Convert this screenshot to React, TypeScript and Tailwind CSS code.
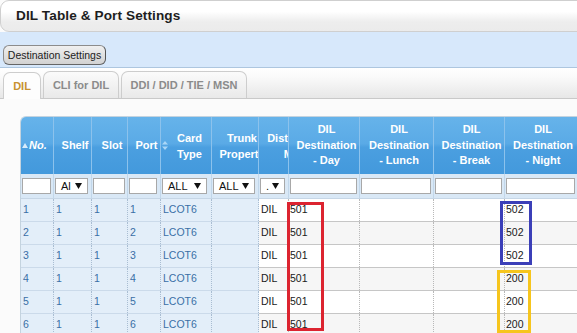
import React from 'react';

const rows = [
  { no: 1, port: 1, night: '502' },
  { no: 2, port: 2, night: '502' },
  { no: 3, port: 3, night: '502' },
  { no: 4, port: 4, night: '200' },
  { no: 5, port: 5, night: '200' },
  { no: 6, port: 6, night: '200' },
];

const Caret = () => (
  <svg width="7" height="6" viewBox="0 0 7 6" className="shrink-0">
    <path d="M0 0h7L3.5 6z" fill="#111" />
  </svg>
);

const SortBoth = () => (
  <svg width="6" height="9" viewBox="0 0 6 9" className="shrink-0">
    <path d="M3 0L6 3.5H0z M0 5.5h6L3 9z" fill="#a9d6f7" />
  </svg>
);

const SortUp = () => (
  <svg width="6" height="5" viewBox="0 0 6 5" className="shrink-0 mr-[1px]">
    <path d="M3 0L6 5H0z" fill="#d6ecfc" />
  </svg>
);

const TextBox = () => <div className="h-[16px] w-full bg-white border border-[#a8a8a8]" />;

const SelectBox = ({ label }: { label: string }) => (
  <div className="h-[16px] w-full bg-white border border-[#a8a8a8] flex items-center justify-between pl-[5px] pr-[5px] text-[11px] text-[#111] leading-none overflow-hidden">
    <span>{label}</span>
    <Caret />
  </div>
);

const th = 'h-[57px] shrink-0 border-r border-[#8cc2ec] flex items-center text-white font-bold text-[11px] leading-[15.5px]';
const fl = 'h-[24px] shrink-0 border-r border-[#c2d7ea] flex items-center pl-[1px] pr-[2px]';
const lc = 'shrink-0 h-full border-r border-dotted border-[#a9bdd2] pl-[2px] flex items-center text-[#3a6ea6]';
const rc = 'shrink-0 h-full border-r border-dotted border-[#b8b8b8] pl-[1px] flex items-center text-[#1a1a1a]';

export default function App() {
  return (
    <div className="relative w-[577px] h-[333px] overflow-hidden bg-[#fbfbfb] font-['Liberation_Sans',Arial,sans-serif]">
      {/* title bar */}
      <div className="h-[32px] w-[600px] border border-[#cfcfcf] rounded-l-[9px] bg-[linear-gradient(#ffffff,#ffffff_35%,#ededed_70%,#ebebeb)] flex items-center pl-[15px]">
        <h1 className="text-[13.6px] font-bold text-[#1e1e1e] tracking-[0.1px]">DIL Table &amp; Port Settings</h1>
      </div>

      {/* toolbar */}
      <div className="h-[36px] bg-[#d7e8fb] border-b border-[#adc6df] pt-[10px] pl-[3px]">
        <button className="h-[20px] w-[103px] rounded-[6px] border border-[#8c8c8c] border-r-[#555] border-b-[#666] bg-[linear-gradient(#f0f0f0,#dedede_60%,#d2d2d2)] text-[10.5px] text-[#222] leading-none">
          Destination Settings
        </button>
      </div>

      {/* tabs */}
      <div className="h-[31px] bg-[linear-gradient(#ffffff,#fafafa_30%,#e7e7e7)] border-b border-[#c9c9c9] flex items-end pl-[3px] gap-[2px]">
        <div className="h-[27px] w-[38px] -mb-[1px] rounded-t-[7px] border border-b-0 border-[#cdcdcd] bg-[#fdfdfd] flex items-center justify-center text-[11px] font-bold text-[#c8922f]">DIL</div>
        <div className="h-[27px] w-[76px] rounded-t-[7px] border border-b-0 border-[#cdcdcd] bg-[linear-gradient(#fbfbfb,#e9e9e9)] flex items-center justify-center text-[11px] font-bold text-[#8b8b8b]">CLI for DIL</div>
        <div className="h-[27px] w-[126px] rounded-t-[7px] border border-b-0 border-[#cdcdcd] bg-[linear-gradient(#fbfbfb,#e9e9e9)] flex items-center justify-center text-[11px] font-bold text-[#8b8b8b]">DDI / DID / TIE / MSN</div>
      </div>

      {/* grid */}
      <div className="ml-[20px] mt-[17px] w-[620px] border-t border-l border-[#c4d3df] rounded-tl-[6px] overflow-hidden">
        <div className="flex bg-[linear-gradient(#66b3ea,#5aaae6_47%,#4b9fe0_53%,#4399dc)]">
          <div className={`${th} w-[33px] pl-[1px]`}><SortUp /><span className="italic">No.</span></div>
          <div className={`${th} w-[38px] pl-[5px] justify-center`}>Shelf</div>
          <div className={`${th} w-[36px] pl-[5px] justify-center`}>Slot</div>
          <div className={`${th} w-[33px] pl-[5px] justify-center`}>Port</div>
          <div className={`${th} w-[51px] pl-[1px] leading-[16px]`}><SortBoth /><span className="flex-1 text-center">Card<br />Type</span></div>
          <div className={`${th} w-[47px] overflow-hidden leading-[16px]`}><span className="w-[60px] shrink-0 text-center">Trunk Property</span></div>
          <div className={`${th} w-[30px] overflow-hidden leading-[16px]`}><span className="w-[78px] shrink-0 text-center">Distribution Mode</span></div>
          <div className={`${th} w-[71px] pl-[5px] justify-center text-center`}>DIL<br />Destination<br />- Day</div>
          <div className={`${th} w-[74px] pl-[5px] justify-center text-center`}>DIL<br />Destination<br />- Lunch</div>
          <div className={`${th} w-[71px] pl-[5px] justify-center text-center`}>DIL<br />Destination<br />- Break</div>
          <div className={`${th} w-[73px] pl-[4px] justify-center text-center`}>DIL<br />Destination<br />- Night</div>
        </div>

        <div className="flex bg-[#d9e8f6] border-b border-[#c6d6e6]">
          <div className={`${fl} w-[33px]`}><TextBox /></div>
          <div className={`${fl} w-[38px] pr-[3px]`}><SelectBox label="Al" /></div>
          <div className={`${fl} w-[36px]`}><TextBox /></div>
          <div className={`${fl} w-[33px] pr-[3px]`}><TextBox /></div>
          <div className={`${fl} w-[51px] pr-[4px]`}><SelectBox label="ALL" /></div>
          <div className={`${fl} w-[47px] pr-[3px]`}><SelectBox label="ALL" /></div>
          <div className={`${fl} w-[30px] pr-[3px]`}><SelectBox label="." /></div>
          <div className={`${fl} w-[71px]`}><TextBox /></div>
          <div className={`${fl} w-[74px]`}><TextBox /></div>
          <div className={`${fl} w-[71px]`}><TextBox /></div>
          <div className={`${fl} w-[73px]`}><TextBox /></div>
        </div>

        {rows.map((r, i) => (
          <div key={r.no} className={`flex h-[23px] text-[10.5px] ${i % 2 ? 'bg-[#f6f6f6]' : 'bg-white'}`}>
            <div className="flex h-full bg-[#e3eef9] border-b border-[#cbdaea]">
              <div className={`${lc} w-[33px]`}>{r.no}</div>
              <div className={`${lc} w-[38px]`}>1</div>
              <div className={`${lc} w-[36px]`}>1</div>
              <div className={`${lc} w-[33px]`}>{r.port}</div>
              <div className={`${lc} w-[51px]`}>LCOT6</div>
              <div className={`${lc} w-[47px]`}></div>
            </div>
            <div className="flex h-full border-b border-[#c6c6c6]">
              <div className={`${rc} w-[30px] pl-[2px]`}>DIL</div>
              <div className={`${rc} w-[71px]`}>501</div>
              <div className={`${rc} w-[74px]`}></div>
              <div className={`${rc} w-[71px]`}></div>
              <div className={`${rc} w-[73px]`}>{r.night}</div>
            </div>
          </div>
        ))}
      </div>

      {/* annotation boxes */}
      <div className="absolute left-[287px] top-[202px] w-[37px] h-[129px] border-[3px] border-[#dc2430]" />
      <div className="absolute left-[500px] top-[201px] w-[32px] h-[64px] border-[3px] border-[#3b3fb8]" />
      <div className="absolute left-[497px] top-[270px] w-[34px] h-[63px] border-[3px] border-[#f6c51d]" />
    </div>
  );
}
